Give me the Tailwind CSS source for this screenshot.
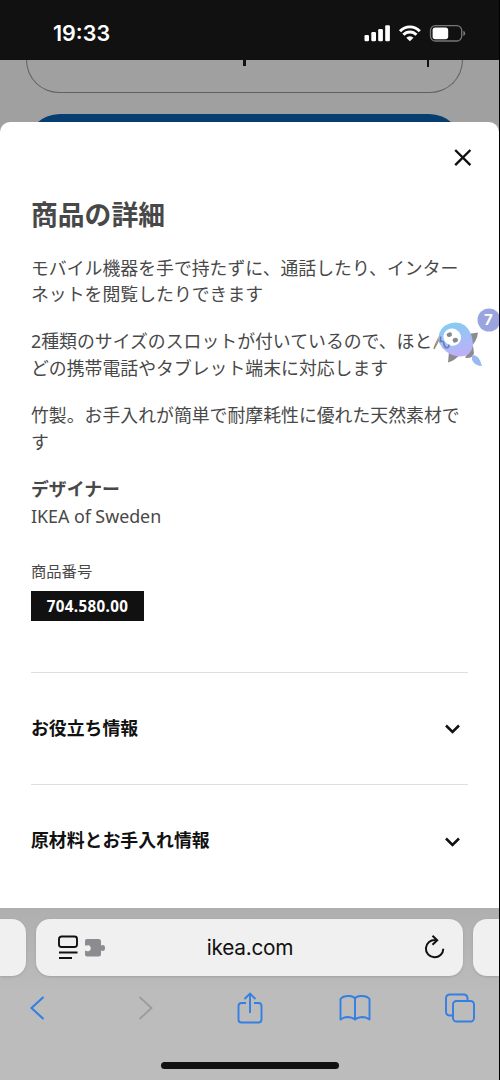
<!DOCTYPE html>
<html lang="ja">
<head>
<meta charset="utf-8">
<title>商品の詳細</title>
<script src="https://cdn.jsdelivr.net/npm/@tailwindcss/browser@4"></script>
</head>
<body class="h-[1080px] w-[500px] overflow-hidden bg-black font-['Noto_Sans','Noto_Sans_CJK_JP',sans-serif]">
<div class="relative flex h-[1080px] w-[499px] flex-col overflow-hidden bg-[#a0a0a0]">
  <!-- Status bar -->
  <header class="flex h-[60px] shrink-0 items-start justify-between bg-[#111] pl-[53px] pr-[33px] pt-[20px] text-white">
    <span class="font-[Inter,sans-serif] text-[21.5px] leading-[27px] font-semibold">19:33</span>
    <div class="flex pt-[4px]">
      <svg class="h-[19px] w-[102px]" viewBox="0 0 102 19" fill="#fff">
        <rect x="0.5" y="11" width="4.5" height="6.3" rx="1.2"/><rect x="7.3" y="8" width="4.7" height="9.3" rx="1.2"/><rect x="14.2" y="5" width="4.7" height="12.3" rx="1.2"/><rect x="21.2" y="1.3" width="4.7" height="16" rx="1.2"/>
        <g fill="none" stroke="#fff" stroke-width="2.9"><path d="M36 7.2A13.5 13.5 0 0 1 55.800 7.2"/><path d="M39.4 10.800A8.800 8.800 0 0 1 52.400 10.800"/></g>
        <path d="M45.900 17.300L42.300 13.700A5 5 0 0 1 49.500 13.700Z"/>
        <rect x="66.500" y="1.700" width="31.200" height="15.300" rx="4.800" fill="none" stroke="#777" stroke-width="1.300"/>
        <rect x="68.600" y="3.500" width="15.600" height="11.700" rx="2.700"/><path d="M99.300 6.700q2 .8 2 2.700t-2 2.700z" fill="#777"/>
      </svg>
    </div>
  </header>
  <!-- Dimmed page behind the sheet -->
  <div class="flex h-[62px] shrink-0 flex-col items-center overflow-hidden pr-[10px]">
    <div class="flex h-[33px] w-[437px] shrink-0 justify-between rounded-b-[34px] border border-t-0 border-[#606060] pr-[33px] pl-[216px]">
      <span class="h-[6px] w-[3px] bg-[#111]"></span><span class="h-[7px] w-[2px] bg-[#111]"></span>
    </div>
    <div class="mt-[21px] h-[68px] w-[437px] shrink-0 rounded-full bg-[#083d70]"></div>
  </div>
  <!-- Sheet -->
  <main class="relative h-[786px] shrink-0 rounded-t-[10px] bg-white pl-[31px] pr-[31px] text-[17.87px] leading-[26.8px] text-[#484848]">
    <div class="-mr-[4px] flex justify-end pt-[27px]">
      <svg class="size-[18px]" viewBox="0 0 18 18" fill="none" stroke="#111" stroke-width="2.4"><path d="M1.200 1L16.400 16.200M16.400 1L1.200 16.200"/></svg>
    </div>
    <h1 class="mt-[28px] text-[26.8px] leading-[40px] font-bold">商品の詳細</h1>
    <div class="mt-[19.5px] flex flex-col gap-[20.4px]">
      <p class="whitespace-nowrap">モバイル機器を手で持たずに、通話したり、インター<br>ネットを閲覧したりできます</p>
      <p class="whitespace-nowrap">2種類のサイズのスロットが付いているので、ほとん<br>どの携帯電話やタブレット端末に対応します</p>
      <p class="whitespace-nowrap">竹製。お手入れが簡単で耐摩耗性に優れた天然素材で<br>す</p>
      <p><b>デザイナー</b><br><span class="tracking-[-0.04px]">IKEA of Sweden</span></p>
    </div>
    <p class="mt-[28.5px] text-[15.3px] leading-[24px]">商品番号</p>
    <span class="mt-[8px] flex h-[30px] w-[113px] items-center justify-center bg-[#111] pt-px text-[15.2px] font-bold tracking-[0.35px] text-white">704.580.00</span>
    <div class="mt-[51px] flex h-[112.5px] items-center justify-between border-t border-[#dfdfdf] pr-[8px] font-bold text-[#111]">
      <span>お役立ち情報</span>
      <svg class="mt-[2px] h-[10px] w-[15px]" viewBox="0 0 15 10" fill="none" stroke="#111" stroke-width="2.500"><path d="M1 1.500L7.500 8L14 1.500"/></svg>
    </div>
    <div class="flex h-[112.5px] items-center justify-between border-t border-[#dfdfdf] pr-[8px] font-bold text-[#111]">
      <span>原材料とお手入れ情報</span>
      <svg class="mt-[2px] h-[10px] w-[15px]" viewBox="0 0 15 10" fill="none" stroke="#111" stroke-width="2.500"><path d="M1 1.500L7.500 8L14 1.500"/></svg>
    </div>
    <!-- Floating assistant -->
    <div class="absolute top-[184px] right-0 h-[64px] w-[68px]">
      <svg class="h-[64px] w-[68px]" viewBox="0 0 68 64">
        <defs><linearGradient id="body" x1=".3" y1="0" x2=".6" y2="1"><stop stop-color="#83cdf2"/><stop offset=".5" stop-color="#a0bff6"/><stop offset="1" stop-color="#c0aef8"/></linearGradient></defs>
        <path d="M2 44Q5 39 8 30L17 28L20 46L6 44Z" fill="#fff" fill-opacity=".9"/>
        <path d="M3 43Q6 38 9 31" fill="none" stroke="#888" stroke-width="1.200"/>
        <g transform="translate(0 1.500)">
        <path d="M34 27L47 25Q46 34 39 40ZM18 44L17 55Q24 53 29 47ZM34 50Q40 52 43 46L42 38Z" fill="#8c8b90"/>
        <path d="M14 18Q25 12 34 18Q42 25 42 38Q40 50 27 49Q14 47 8 35Q6 24 14 18Z" fill="url(#body)"/>
        <ellipse cx="21" cy="29.500" rx="9" ry="8.500" transform="rotate(29 21 30)" fill="#fff"/>
        <ellipse cx="18.300" cy="27.200" rx="2.700" ry="2.200" transform="rotate(-20 18.300 27.200)" fill="#858994"/><ellipse cx="24.300" cy="32.700" rx="2.700" ry="2.300" transform="rotate(-20 24.300 32.700)" fill="#858994"/>
        <path d="M9.500 29V34Q13 33 13 37Q14 41 17 40Q18 39 18 37" fill="none" stroke="#687bb6" stroke-width="1.600"/>
        </g>
        <path d="M41 49Q48 48 51 60Q44 60 41 54Z" fill="#98b9f1"/>
        <circle cx="58" cy="14" r="11.500" fill="#9aa5df"/>
      </svg>
      <span class="absolute top-[2px] left-[53px] font-[Inter,sans-serif] text-[15px] leading-[24px] font-bold text-white">7</span>
    </div>
  </main>
  <!-- Safari toolbar -->
  <footer class="flex h-[172px] shrink-0 flex-col bg-[#bababa] bg-linear-to-b from-[#afafaf] to-[#bcbcbc] to-50%">
    <div class="mt-[11px] flex h-[57px] shrink-0 gap-[10px]">
      <div class="w-[26px] rounded-r-[14px] bg-[#f0f0f0] shadow-sm"></div>
      <div class="flex w-[427px] items-center justify-between rounded-[14px] bg-[#f0f0f0] pr-[18px] pl-[21px] shadow-sm">
        <svg class="h-[26px] w-[50px]" viewBox="0 0 50 26" fill="none" stroke="#111" stroke-width="1.900">
          <rect x="2" y="1.500" width="18" height="10.500" rx="2.500"/><path d="M2 17.500H20.500M2 23H15"/>
          <path stroke="none" fill="#8b8b90" d="M30 4H41.500Q44 4 44 6.500V10.500Q48 8.800 48 13Q48 17 44 15.500V19Q44 21.500 41.500 21.500H30Q28 21.500 28 19.500V15.500C32.500 17.800 35 14.300 33.200 11.500C31.800 9.200 29.500 11 28 10.500V6Q28 4 30 4Z"/>
        </svg>
        <span class="-ml-[8px] pr-[22px] font-[Inter,sans-serif] text-[20.8px] leading-[30px] tracking-[-0.25px] text-[#111]">ikea.com</span>
        <svg class="h-[26px] w-[22px]" viewBox="0 0 22 26" fill="none" stroke="#111" stroke-width="2"><path d="M12.500 5A8.700 8.700 0 1 0 20.300 13.800M9.500 .8L14.200 5.200L9.500 9.700"/></svg>
      </div>
      <div class="w-[26px] shrink-0 rounded-l-[14px] bg-[#f0f0f0] shadow-sm"></div>
    </div>
    <nav class="mt-[14px] flex h-[36px] shrink-0 items-center pl-[29px] text-[#347fe3]">
      <svg class="h-[26px] w-[17px]" viewBox="0 0 17 26" fill="none" stroke="currentColor" stroke-width="2.100"><path d="M14.500 2L2.500 13L14.500 24"/></svg>
      <svg class="ml-[91px] h-[26px] w-[17px]" viewBox="0 0 17 26" fill="none" stroke="#9c9c9c" stroke-width="1.900"><path d="M2.500 2L14.500 13L2.500 24"/></svg>
      <svg class="ml-[81.5px] h-[34px] w-[28px]" viewBox="0 0 28 34" fill="none" stroke="currentColor" stroke-width="1.900"><path d="M10 12H5.500Q2.500 12 2.500 15V28.500Q2.500 31.500 5.500 31.500H22.500Q25.500 31.500 25.500 28.500V15Q25.500 12 22.500 12H18M14 22V2.500M8.500 8L14 2.500L19.500 8"/></svg>
      <svg class="ml-[74.5px] h-[30px] w-[34px]" viewBox="0 0 34 30" fill="none" stroke="currentColor" stroke-width="1.900" stroke-linejoin="round"><path d="M17 5.500Q16 3.500 12 3Q5 2.500 2.500 6V26.500Q5.500 24 10 24Q15 24.500 17 26.500Q19 24.500 24 24Q28.500 24 31.500 26.500V6Q29 2.500 22 3Q18 3.500 17 5.500V26.500"/></svg>
      <svg class="ml-[72px] h-[30px] w-[32px]" viewBox="0 0 32 30" fill="none" stroke="currentColor" stroke-width="1.900"><path d="M9 22.500H6Q2 22.500 2 18.500V5.500Q2 1.500 6 1.500H19.500Q23.500 1.500 23.500 5.500V8"/><rect x="9" y="8" width="21" height="20.500" rx="3.500"/></svg>
    </nav>
    <div class="mt-[36px] ml-[161px] h-[7px] w-[178px] shrink-0 rounded-full bg-[#111]"></div>
  </footer>
</div>
</body>
</html>
